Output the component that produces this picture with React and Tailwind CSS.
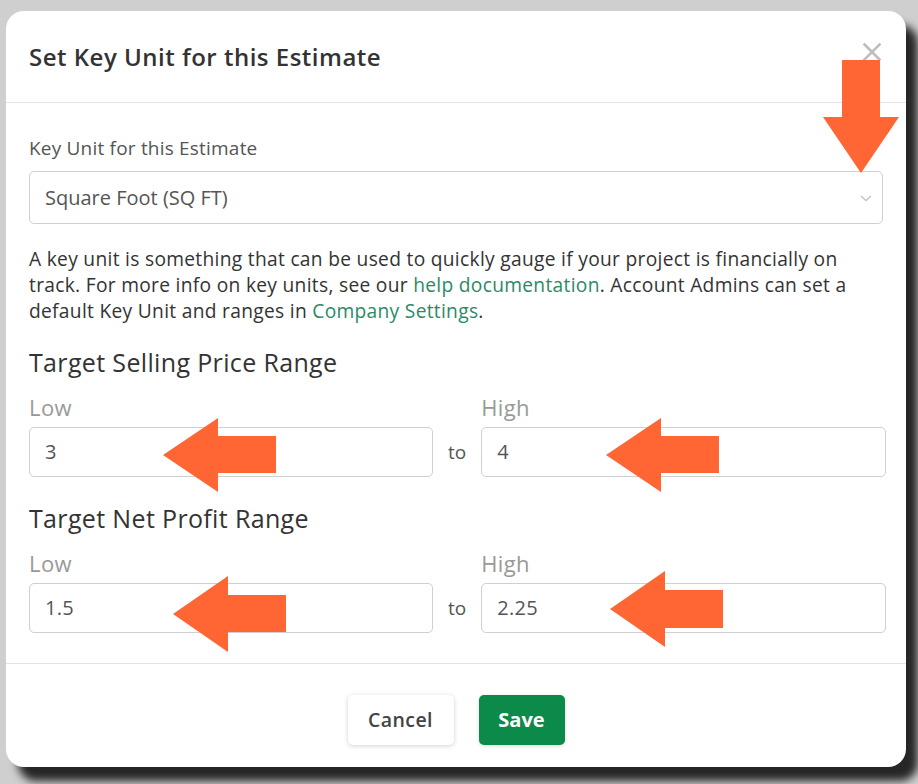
import React from "react";

const arrows = [
  "842,60 880,60 880,117 899,117 861,173 823,117 842,117",
  "163,455 218,418 218,436 276,436 276,473 218,473 218,492",
  "606,455 661,418 661,436 719,436 719,473 661,473 661,492",
  "173,614 228,576 228,595 286,595 286,632 228,632 228,652",
  "610,609 665,571 665,590 723,590 723,628 665,628 665,647",
];

function Range({ title, low, high, titleMt }) {
  return (
    <div className={titleMt}>
      <div className="text-[25px] leading-[28px] tracking-[0.35px] text-[#333]">{title}</div>
      <div className="grid grid-cols-[404px_1fr_405px] gap-x-[15px]">
        <div className="text-[22px] leading-[24px] tracking-[0.4px] text-[#999] mt-[19px]">Low</div>
        <div />
        <div className="text-[22px] leading-[24px] tracking-[0.4px] text-[#999] mt-[19px]">High</div>
        <div className="mt-[8px] h-[50px] rounded-[5px] border border-[#cfcfcf] flex items-center pl-[15px] text-[20px] tracking-[0.3px] text-[#555]">
          {low}
        </div>
        <div className="mt-[8px] flex items-center text-[19px] text-[#555]">to</div>
        <div className="mt-[8px] h-[50px] rounded-[5px] border border-[#cfcfcf] flex items-center pl-[15px] text-[20px] tracking-[0.3px] text-[#555]">
          {high}
        </div>
      </div>
    </div>
  );
}

export default function App() {
  return (
    <div
      className="relative w-[918px] h-[784px] overflow-hidden bg-[#cfcfcf] pt-[11px] pl-[6px]"
      style={{ fontFamily: "'Open Sans', 'Liberation Sans', sans-serif" }}
    >
      <div className="w-[900px] h-[756px] rounded-[18px] bg-white shadow-[12px_14px_8px_rgba(0,0,0,0.82)] flex flex-col">
        <div className="h-[92px] shrink-0 border-b border-[#e3e3e3] pl-[23px] pr-[24px] flex items-center justify-between">
          <h1 className="text-[24px] font-semibold tracking-[0.5px] text-[#333]">Set Key Unit for this Estimate</h1>
          <svg width="20" height="20" viewBox="0 0 20 20" className="-mt-[9px]">
            <path d="M2.5 2.5 L17.5 17.5 M17.5 2.5 L2.5 17.5" stroke="#bdbdbd" strokeWidth="2.6" strokeLinecap="square" />
          </svg>
        </div>
        <div className="px-[23px] pt-[33px] pb-[30px] border-b border-[#e3e3e3]">
          <div className="text-[19px] leading-[24px] tracking-[0.2px] text-[#555]">Key Unit for this Estimate</div>
          <div className="mt-[11px] h-[53px] rounded-[5px] border border-[#cfcfcf] flex items-center justify-between pl-[15px] pr-[9px] text-[20px] text-[#555]">
            <span>Square Foot (SQ FT)</span>
            <svg width="14" height="10" viewBox="0 0 14 10">
              <polyline points="2,3 7,7.5 12,3" fill="none" stroke="#c4c4c4" strokeWidth="1.4" />
            </svg>
          </div>
          <p className="mt-[22px] text-[19.2px] leading-[26px] tracking-[0.3px] text-[#333]">
            A key unit is something that can be used to quickly gauge if your project is financially on
            <br />
            track. For more info on key units, see our <span className="text-[#2b8a66]">help documentation</span>. Account Admins can set a
            <br />
            default Key Unit and ranges in <span className="text-[#2b8a66]">Company Settings</span>.
          </p>
          <Range title="Target Selling Price Range" low="3" high="4" titleMt="mt-[24px]" />
          <Range title="Target Net Profit Range" low="1.5" high="2.25" titleMt="mt-[27px]" />
        </div>
        <div className="pt-[31px] flex justify-center gap-[25px]">
          <button className="h-[50px] w-[106px] rounded-[5px] bg-white shadow-[0_1px_5px_rgba(0,0,0,0.18)] text-[19.5px] font-semibold text-[#444] tracking-[0.4px]">
            Cancel
          </button>
          <button className="h-[50px] w-[86px] rounded-[5px] bg-[#0b8a4a] shadow-[0_1px_4px_rgba(0,0,0,0.15)] text-[20px] font-bold text-white">
            Save
          </button>
        </div>
      </div>
      <svg className="absolute inset-0 pointer-events-none" width="918" height="784" viewBox="0 0 918 784">
        {arrows.map((p, i) => (
          <polygon key={i} points={p} fill="#ff6633" />
        ))}
      </svg>
    </div>
  );
}
